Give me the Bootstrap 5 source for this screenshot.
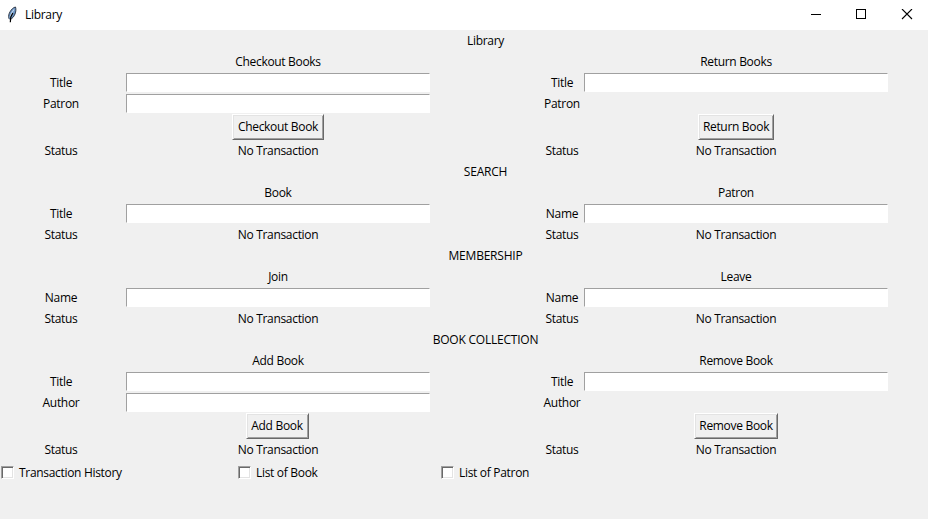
<!DOCTYPE html>
<html lang="en">
<head>
<meta charset="utf-8">
<title>Library</title>
<meta name="viewport" content="width=device-width, initial-scale=1">
<link rel="stylesheet" href="https://cdn.jsdelivr.net/npm/bootstrap@5.3.0/dist/css/bootstrap.min.css">
<style>
body{background:#f0f0f0;color:#000;font:12px/20px "Open Sans","Noto Sans",sans-serif;letter-spacing:-.31px;height:519px}
.titlebar{height:30px}
.app-icon{margin-left:7px;margin-right:7px}
.win-controls{margin-right:-2px}
.win-btn{width:46px;height:30px}
.app-grid{display:grid;grid-template-columns:122px 4px 304px 1px 109px 44px 304px;grid-template-rows:repeat(4,21px) 26px repeat(13,21px) 26px 21px 25px;justify-items:center;align-items:center}
.c1{grid-column:1}.c2{grid-column:3}.c3{grid-column:5}.c4{grid-column:6}.c5{grid-column:7}
.r1{grid-row:1}.r2{grid-row:2}.r3{grid-row:3}.r4{grid-row:4}.r5{grid-row:5}.r6{grid-row:6}.r7{grid-row:7}
.r8{grid-row:8}.r9{grid-row:9}.r10{grid-row:10}.r11{grid-row:11}.r12{grid-row:12}.r13{grid-row:13}.r14{grid-row:14}
.r15{grid-row:15}.r16{grid-row:16}.r17{grid-row:17}.r18{grid-row:18}.r19{grid-row:19}.r20{grid-row:20}.r21{grid-row:21}
.app-grid>label,.app-grid>span{white-space:nowrap}
.section-title{letter-spacing:-.22px}
.tk-entry.form-control{width:304px;height:19px;min-height:0;padding:0 2px;font-size:12px;border:1px solid;border-color:#a0a0a0 #fff #fff #a0a0a0;border-radius:0;background:#fff}
.tk-btn.btn{height:26px;padding:0;font-size:12px;line-height:20px;letter-spacing:inherit;color:#000;background:#f0f0f0;border:1px solid;border-color:#fff #696969 #696969 #fff;border-radius:0;box-shadow:inset 1px 1px #e3e3e3,inset -1px -1px #a0a0a0;white-space:nowrap}
.tk-check.form-check-input{width:13px;height:13px;margin:0;border:1px solid;border-color:#a0a0a0 #fff #fff #a0a0a0;border-radius:0;background:#fff;box-shadow:inset 1px 1px #696969,inset -1px -1px #e3e3e3}
.check-row{gap:5px}
.w-co{width:92px}.w-rb{width:76px}.w-ab{width:63px;margin-right:2px}.w-rm{width:84px}
.history-check{justify-self:start;margin-left:1px}
.book-check{justify-self:start;margin-left:112px}
.patron-check{justify-self:start;margin-left:10px}
</style>
<script src="https://cdn.jsdelivr.net/npm/bootstrap@5.3.0/dist/js/bootstrap.bundle.min.js" defer></script>
</head>
<body class="m-0 overflow-hidden">
<header class="titlebar bg-white d-flex align-items-center">
<svg class="app-icon" width="11" height="18" viewBox="0 0 11 18" aria-hidden="true"><path d="M8.500 1C6 1.500 4.500 3.500 3.200 5.500 1.800 7.800 1.200 10 2 12.500l1 1C5.500 12.500 7 10.500 8 8 9 5.500 9.200 3 8.500 1Z" fill="#6c95c4" stroke="#222b3a" stroke-width=".9"/><path d="M7 3.500C4.800 6 3.600 8.500 3 11.500" stroke="#c8dbef" stroke-width="1.100" fill="none"/><path d="M5.800 7 3.800 11 3.300 16.200" stroke="#000" stroke-width="1.200" fill="none"/></svg>
<span>Library</span>
<div class="win-controls d-flex ms-auto">
<div class="win-btn d-flex align-items-center justify-content-center"><svg width="12" height="12" shape-rendering="crispEdges"><path d="M2 5.500H12" stroke="#000"/></svg></div>
<div class="win-btn d-flex align-items-center justify-content-center"><svg width="12" height="12" shape-rendering="crispEdges"><path d="M1.500 .5H10.500V9.500H1.500Z" fill="none" stroke="#000"/></svg></div>
<div class="win-btn d-flex align-items-center justify-content-center"><svg width="12" height="12"><path d="M1 0 11 10M11 0 1 10" stroke="#000" stroke-width="1.100"/></svg></div>
</div>
</header>
<main class="app-grid">
<span class="c3 r1">Library</span>

<span class="c2 r2">Checkout Books</span><span class="c5 r2">Return Books</span>
<label class="c1 r3">Title</label><input class="form-control tk-entry c2 r3"><label class="c4 r3">Title</label><input class="form-control tk-entry c5 r3">
<label class="c1 r4">Patron</label><input class="form-control tk-entry c2 r4"><label class="c4 r4">Patron</label>
<button class="btn tk-btn w-co c2 r5">Checkout Book</button><button class="btn tk-btn w-rb c5 r5">Return Book</button>
<span class="c1 r6">Status</span><span class="c2 r6">No Transaction</span><span class="c4 r6">Status</span><span class="c5 r6">No Transaction</span>

<span class="c3 r7 section-title">SEARCH</span>
<span class="c2 r8">Book</span><span class="c5 r8">Patron</span>
<label class="c1 r9">Title</label><input class="form-control tk-entry c2 r9"><label class="c4 r9">Name</label><input class="form-control tk-entry c5 r9">
<span class="c1 r10">Status</span><span class="c2 r10">No Transaction</span><span class="c4 r10">Status</span><span class="c5 r10">No Transaction</span>

<span class="c3 r11 section-title">MEMBERSHIP</span>
<span class="c2 r12">Join</span><span class="c5 r12">Leave</span>
<label class="c1 r13">Name</label><input class="form-control tk-entry c2 r13"><label class="c4 r13">Name</label><input class="form-control tk-entry c5 r13">
<span class="c1 r14">Status</span><span class="c2 r14">No Transaction</span><span class="c4 r14">Status</span><span class="c5 r14">No Transaction</span>

<span class="c3 r15 section-title">BOOK COLLECTION</span>
<span class="c2 r16">Add Book</span><span class="c5 r16">Remove Book</span>
<label class="c1 r17">Title</label><input class="form-control tk-entry c2 r17"><label class="c4 r17">Title</label><input class="form-control tk-entry c5 r17">
<label class="c1 r18">Author</label><input class="form-control tk-entry c2 r18"><label class="c4 r18">Author</label>
<button class="btn tk-btn w-ab c2 r19">Add Book</button><button class="btn tk-btn w-rm c5 r19">Remove Book</button>
<span class="c1 r20">Status</span><span class="c2 r20">No Transaction</span><span class="c4 r20">Status</span><span class="c5 r20">No Transaction</span>

<label class="c1 r21 check-row history-check d-flex align-items-center"><input type="checkbox" class="form-check-input tk-check">Transaction History</label>
<label class="c2 r21 check-row book-check d-flex align-items-center"><input type="checkbox" class="form-check-input tk-check">List of Book</label>
<label class="c3 r21 check-row patron-check d-flex align-items-center"><input type="checkbox" class="form-check-input tk-check">List of Patron</label>
</main>
</body>
</html>
